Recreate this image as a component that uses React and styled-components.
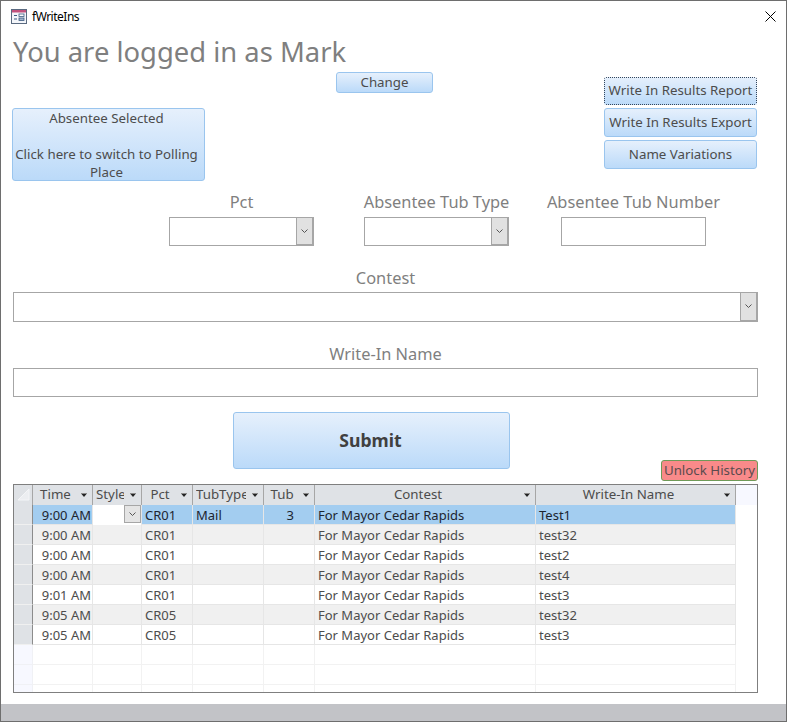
import React from "react";
import styled, { createGlobalStyle } from "styled-components";

const FONT = `"Noto Sans", "Open Sans", "Liberation Sans", sans-serif`;
const COLUMNS = "19px 60px 49px 51px 71px 51px 221px 200px 1fr";

const GlobalStyle = createGlobalStyle`
  html, body { margin: 0; padding: 0; background: #fff; }
  body { font-family: ${FONT}; }
`;

const Win = styled.div`
  box-sizing: border-box;
  width: 787px;
  height: 722px;
  border: 1px solid #6e6e6e;
  display: flex;
  flex-direction: column;
  background: #fff;
`;

const TitleBar = styled.div`
  height: 31px;
  flex: none;
  display: flex;
  align-items: center;
  padding: 0 10px;
  gap: 5px;
`;

const TitleText = styled.span`
  flex: 1;
  font-size: 12px;
  letter-spacing: -0.5px;
  color: #000;
`;

const CloseSvg = styled.svg`
  display: block;
  width: 11px;
  height: 11px;
`;

const Form = styled.div`
  flex: 1;
  display: flex;
  flex-direction: column;
  padding: 0 28px 0 12px;
`;

const TopArea = styled.div`
  display: grid;
  grid-template-columns: 1fr 153px;
  height: 158px;
  margin-right: 1px;
`;

const TopLeft = styled.div`
  display: flex;
  flex-direction: column;
`;

const Heading = styled.h1`
  margin: 0;
  height: 40px;
  font-size: 27.4px;
  line-height: 40px;
  font-weight: 400;
  color: #7f7f7f;
  white-space: nowrap;
`;

const Button = styled.button`
  box-sizing: border-box;
  display: block;
  padding: 0 0 2px;
  border: 1px solid #9ac5ee;
  border-radius: 3px;
  background: linear-gradient(#e6f0fc, #bbdaf9);
  color: #4c4c4c;
  font-family: ${FONT};
  font-size: 13.3px;
  line-height: 18px;
  text-align: center;
  white-space: nowrap;
`;

const ChangeButton = styled(Button)`
  width: 97px;
  height: 21px;
  margin-left: 323px;
`;

const ToggleButton = styled(Button)`
  width: 193px;
  height: 73px;
  margin-left: -1px;
  margin-top: 15px;
  padding: 0 4px 2px 0;
`;

const ToggleLine = styled.span`
  display: block;
  height: 18px;
`;

const SideButtons = styled.div`
  display: flex;
  flex-direction: column;
  gap: 3px;
  padding-top: 45px;
`;

const SideButton = styled(Button)`
  width: 153px;
  height: 29px;
`;

// the focused button: a one pixel dotted edge, drawn so every other pixel is dark
const FocusButton = styled(SideButton)`
  height: 28px;
  border: none;
  background:
    repeating-linear-gradient(90deg, #34465c 0 1px, transparent 1px 2px) top / 100% 1px no-repeat,
    repeating-linear-gradient(90deg, #34465c 0 1px, transparent 1px 2px) bottom / 100% 1px no-repeat,
    repeating-linear-gradient(0deg, #34465c 0 1px, transparent 1px 2px) left / 1px 100% no-repeat,
    repeating-linear-gradient(0deg, #34465c 0 1px, transparent 1px 2px) right / 1px 100% no-repeat,
    linear-gradient(#e6f0fc, #bbdaf9);
`;

const FieldRow = styled.div`
  display: flex;
  gap: 50px;
  padding-left: 156px;
`;

const Field = styled.div`
  flex: none;
  width: 145px;
  display: flex;
  flex-direction: column;
  align-items: center;
  margin-left: ${(p) => p.$shift || 0}px;
`;

const Label = styled.div`
  height: ${(p) => p.$h || 27}px;
  font-size: 16.4px;
  line-height: 24px;
  color: #7f7f7f;
  white-space: nowrap;
  text-align: center;
`;

const Box = styled.div`
  box-sizing: border-box;
  width: 100%;
  height: ${(p) => p.$h || 29}px;
  border: 1px solid #a6a6a6;
  background: #fff;
  display: flex;
  justify-content: flex-end;
`;

const ComboButton = styled.div`
  box-sizing: border-box;
  width: 17px;
  height: 100%;
  background: #e1e1e1;
  border-left: 1px solid #a6a6a6;
  border-right: 1px solid #a6a6a6;
  border-bottom: 1px solid #a6a6a6;
  display: flex;
  align-items: center;
  justify-content: center;
`;

const WideField = styled.div`
  display: flex;
  flex-direction: column;
  align-items: center;
  width: 745px;
  margin-top: 20px;
`;

const SubmitButton = styled(Button)`
  flex: none;
  width: 277px;
  height: 57px;
  margin: 15px 0 0 220px;
  padding-right: 2px;
  font-size: 17.6px;
  font-weight: 700;
  color: #404040;
`;

const UnlockRow = styled.div`
  display: flex;
  justify-content: flex-end;
  width: 745px;
  height: 15px;
`;

const UnlockButton = styled(Button)`
  width: 97px;
  height: 21px;
  margin-top: -9px;
  border-color: #6f9a58;
  background: #f98a8a;
  color: #5b4a4e;
`;

const Grid = styled.div`
  box-sizing: border-box;
  width: 745px;
  height: 209px;
  border: 1px solid #7f7f7f;
  background: #fff;
  overflow: hidden;
`;

const Row = styled.div`
  display: grid;
  grid-template-columns: ${COLUMNS};
  height: 20px;
`;

const HeadCell = styled.div`
  box-sizing: border-box;
  position: relative;
  height: 20px;
  background: ${(p) => (p.$blank ? "#f7f8ff" : "#dfe2e6")};
  border-right: ${(p) => (p.$blank ? "none" : "1px solid #a6a6a6")};
  color: #4c4c4c;
  font-size: 13.3px;
  line-height: 18px;
  text-align: ${(p) => (p.$clip ? "left" : "center")};
  padding: 0 ${(p) => (p.$clip ? "17px" : "14px")} 0 ${(p) => (p.$clip ? "3px" : "0")};
  white-space: nowrap;
`;

// Style and TubType are cut off by their narrow columns, as in Access
const HeadText = styled.span`
  display: block;
  overflow: hidden;
`;

const SortArrow = styled.svg`
  position: absolute;
  right: 5px;
  top: 8px;
  width: 6px;
  height: 5px;
`;

const CornerSvg = styled.svg`
  display: block;
  width: 18px;
  height: 20px;
`;

const Selector = styled.div`
  box-sizing: border-box;
  height: 20px;
  background: ${(p) => (p.$empty ? "#f7f8ff" : "#dfe2e6")};
  border-right: 1px solid ${(p) => (p.$empty ? "#f0f1f5" : "#8c8c8c")};
  border-bottom: 1px solid ${(p) => (p.$empty ? "#f0f1f5" : "#f0f0f0")};
`;

const Cell = styled.div`
  box-sizing: border-box;
  height: 20px;
  background: ${(p) => (p.$selected ? "#a3cdf0" : p.$alt ? "#f0f0f0" : "#fff")};
  color: ${(p) => (p.$selected ? "#1c2530" : "#4c4c4c")};
  border-right: 1px solid ${(p) => (p.$empty ? "#f2f2f2" : "#e6e6e6")};
  border-bottom: 1px solid ${(p) => (p.$empty ? "#f2f2f2" : "#e6e6e6")};
  font-size: 13px;
  line-height: 21px;
  padding: 0 ${(p) => (p.$right ? "1px" : "3px")};
  text-align: ${(p) => (p.$right ? "right" : "left")};
  white-space: nowrap;
  overflow: hidden;
`;

const TubCell = styled(Cell)`
  padding-right: 20px;
`;

const StyleEdit = styled.div`
  box-sizing: border-box;
  height: 20px;
  background: #fff;
  border-right: 1px solid #e6e6e6;
  display: flex;
  justify-content: flex-end;
  align-items: flex-start;
`;

const GridCombo = styled.div`
  box-sizing: border-box;
  width: 17px;
  height: 18px;
  background: #e4e4e4;
  border: 1px solid #a6a6a6;
  display: flex;
  align-items: center;
  justify-content: center;
`;

const RightFill = styled.div`
  height: 20px;
  background: #fff;
  border-bottom: 1px solid #f2f2f2;
`;

const StatusBar = styled.div`
  height: 17px;
  flex: none;
  background: #c2c3c7;
`;

const FormIcon = () => (
  <svg width="16" height="16" viewBox="0 0 16 16">
    <rect x="0.5" y="0.5" width="15" height="14" fill="#f4f6fa" stroke="#5a6a80" />
    <rect x="1" y="1" width="14" height="2.5" fill="#c2527d" />
    <path d="M3 6.5h3M3 10h3" stroke="#3c5a80" />
    <rect x="8" y="5" width="5" height="2.5" fill="#fff" stroke="#3c5a80" strokeWidth="0.8" />
    <rect x="8" y="9" width="5" height="2.5" fill="#9fb4cc" stroke="#3c5a80" strokeWidth="0.8" />
  </svg>
);

const CloseIcon = () => (
  <CloseSvg viewBox="0 0 11 11">
    <path d="M0.5 0.5L10.5 10.5M10.5 0.5L0.5 10.5" stroke="#000" strokeWidth="1" fill="none" />
  </CloseSvg>
);

const Chevron = () => (
  <svg width="7" height="5" viewBox="0 0 7 5">
    <path d="M0.5 0.5L3.5 3.5L6.5 0.5" stroke="#555" strokeWidth="1" fill="none" />
  </svg>
);

const Arrow = () => (
  <SortArrow viewBox="0 0 6 5">
    <path d="M0 0.5h6" stroke="#8a8a8a" />
    <path d="M0.5 1h5L3 4z" fill="#222" />
  </SortArrow>
);

const CornerMark = () => (
  <CornerSvg viewBox="0 0 18 20">
    <path d="M4 15L15 4V15z" fill="#eceef1" stroke="#f4f5f7" />
  </CornerSvg>
);

const HEADERS = [
  { text: "Time" },
  { text: "Style", clip: true },
  { text: "Pct" },
  { text: "TubType", clip: true },
  { text: "Tub" },
  { text: "Contest" },
  { text: "Write-In Name" },
];

const ROWS = [
  ["9:00 AM", "CR01", "Mail", "3", "Test1"],
  ["9:00 AM", "CR01", "", "", "test32"],
  ["9:00 AM", "CR01", "", "", "test2"],
  ["9:00 AM", "CR01", "", "", "test4"],
  ["9:01 AM", "CR01", "", "", "test3"],
  ["9:05 AM", "CR05", "", "", "test32"],
  ["9:05 AM", "CR05", "", "", "test3"],
];

function App() {
  return (
    <>
      <GlobalStyle />
      <Win>
        <TitleBar>
          <FormIcon />
          <TitleText>fWriteIns</TitleText>
          <CloseIcon />
        </TitleBar>
        <Form>
          <TopArea>
            <TopLeft>
              <Heading>You are logged in as Mark</Heading>
              <ChangeButton>Change</ChangeButton>
              <ToggleButton>
                <ToggleLine>Absentee Selected</ToggleLine>
                <ToggleLine />
                <ToggleLine>Click here to switch to Polling</ToggleLine>
                <ToggleLine>Place</ToggleLine>
              </ToggleButton>
            </TopLeft>
            <SideButtons>
              <FocusButton>Write In Results Report</FocusButton>
              <SideButton>Write In Results Export</SideButton>
              <SideButton>Name Variations</SideButton>
            </SideButtons>
          </TopArea>

          <FieldRow>
            <Field>
              <Label>Pct</Label>
              <Box>
                <ComboButton><Chevron /></ComboButton>
              </Box>
            </Field>
            <Field>
              <Label>Absentee Tub Type</Label>
              <Box>
                <ComboButton><Chevron /></ComboButton>
              </Box>
            </Field>
            <Field $shift={2}>
              <Label>Absentee Tub Number</Label>
              <Box />
            </Field>
          </FieldRow>

          <WideField>
            <Label $h={26}>Contest</Label>
            <Box $h={30}>
              <ComboButton><Chevron /></ComboButton>
            </Box>
          </WideField>

          <WideField>
            <Label $h={26}>Write-In Name</Label>
            <Box />
          </WideField>

          <SubmitButton>Submit</SubmitButton>

          <UnlockRow>
            <UnlockButton>Unlock History</UnlockButton>
          </UnlockRow>

          <Grid>
            <Row>
              <HeadCell><CornerMark /></HeadCell>
              {HEADERS.map((h) => (
                <HeadCell key={h.text} $clip={h.clip}>
                  <HeadText>{h.text}</HeadText>
                  <Arrow />
                </HeadCell>
              ))}
              <HeadCell $blank />
            </Row>
            {ROWS.map((r, i) => (
              <Row key={i}>
                <Selector />
                <Cell $selected={i === 0} $alt={i % 2 === 1} $right>{r[0]}</Cell>
                {i === 0 ? (
                  <StyleEdit>
                    <GridCombo><Chevron /></GridCombo>
                  </StyleEdit>
                ) : (
                  <Cell $alt={i % 2 === 1} />
                )}
                <Cell $selected={i === 0} $alt={i % 2 === 1}>{r[1]}</Cell>
                <Cell $selected={i === 0} $alt={i % 2 === 1}>{r[2]}</Cell>
                <TubCell $selected={i === 0} $alt={i % 2 === 1} $right>{r[3]}</TubCell>
                <Cell $selected={i === 0} $alt={i % 2 === 1}>For Mayor Cedar Rapids</Cell>
                <Cell $selected={i === 0} $alt={i % 2 === 1}>{r[4]}</Cell>
                <RightFill />
              </Row>
            ))}
            {[0, 1, 2].map((i) => (
              <Row key={i}>
                <Selector $empty />
                {[0, 1, 2, 3, 4, 5, 6].map((c) => (
                  <Cell key={c} $empty />
                ))}
                <RightFill />
              </Row>
            ))}
          </Grid>
        </Form>
        <StatusBar />
      </Win>
    </>
  );
}

export default App;
